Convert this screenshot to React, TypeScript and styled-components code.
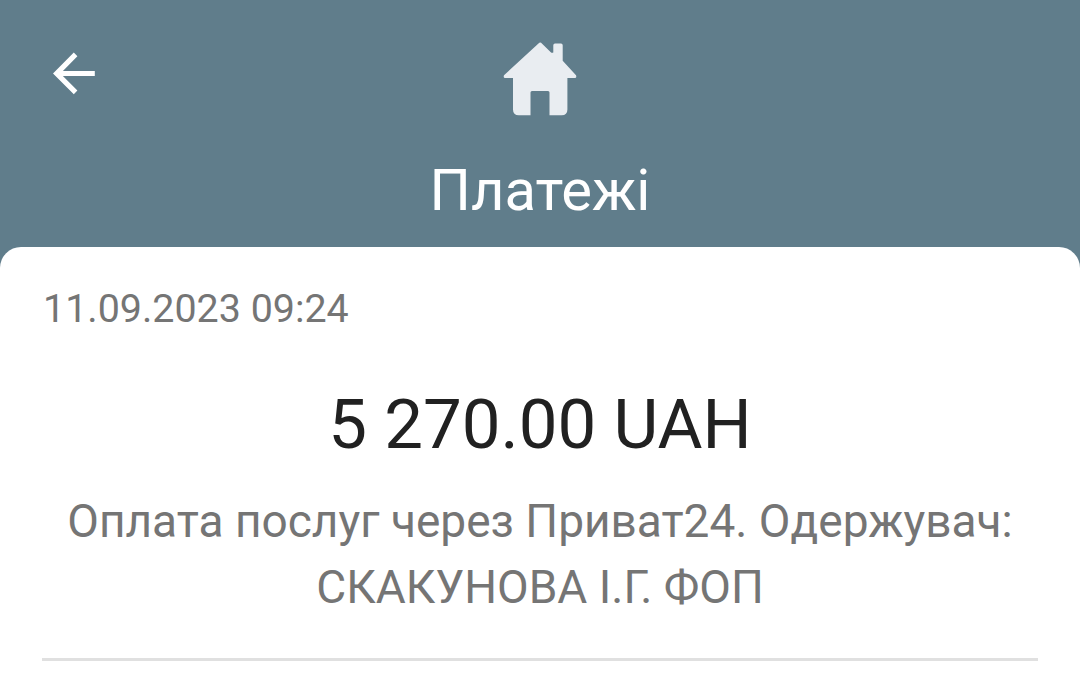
import styled, { createGlobalStyle } from 'styled-components';

export default function App() {
  return (
    <>
      <GlobalStyle />
      <Page>
        <Header>
          <BackButton aria-label="Назад">
            <svg width="43" height="43" viewBox="0 0 43 43">
              <path
                d="M41.8 18.9H9.9L24.4 4.2L20.8 0.6L-0.1 21.5L20.8 42.2L24.4 38.6L9.9 24.1H41.8Z"
                fill="#ffffff"
              />
            </svg>
          </BackButton>
          <HouseIcon width="74" height="74" viewBox="0 0 74 74">
            <path
              d="M36.3 0.8Q37.2 0 38.1 0.8L47.8 10.2Q49 11.3 50.3 10.4V3.2Q50.3 1.5 52 1.5H58Q59.7 1.5 59.7 3.2V18.8L73 33.3Q74 36 71.8 36H64.4V67.5Q64.4 73.3 58.6 73.3H46.5V50.5Q46.5 49 45 49H29Q27.5 49 27.5 50.5V73.3H15.8Q10 73.3 10 67.5V36H2.2Q0 36 1 33.3Z"
              fill="#e9edf1"
            />
          </HouseIcon>
          <Title>Платежі</Title>
        </Header>
        <Card>
          <DateTime>11.09.2023 09:24</DateTime>
          <Amount>5 270.00 UAH</Amount>
          <Description>
            Оплата послуг через Приват24. Одержувач:
            <br />
            СКАКУНОВА І.Г. ФОП
          </Description>
          <Divider />
        </Card>
      </Page>
    </>
  );
}

const GlobalStyle = createGlobalStyle`
  * {
    box-sizing: border-box;
  }

  body {
    margin: 0;
    font-family: Roboto, 'Liberation Sans', sans-serif;
    background: #607d8b;
  }
`;

const Page = styled.div`
  display: flex;
  flex-direction: column;
  height: 691px;
  overflow: hidden;
  background: #607d8b;
`;

const Header = styled.header`
  display: grid;
  grid-template-columns: 1fr 74px 1fr;
  grid-template-rows: 74px auto;
  height: 247px;
  padding: 42px 53px 0;
`;

const BackButton = styled.button`
  display: flex;
  width: 43px;
  height: 43px;
  margin-top: 10px;
  padding: 0;
  border: none;
  background: none;
`;

const HouseIcon = styled.svg`
  grid-column: 2;
`;

const Title = styled.h1`
  grid-column: 1 / -1;
  margin: 40px 0 0;
  font-size: 58px;
  font-weight: 400;
  line-height: 68px;
  text-align: center;
  color: #ffffff;
`;

const Card = styled.main`
  flex: 1;
  padding: 38px 42px 0;
  border-radius: 21px 21px 0 0;
  background: #ffffff;
`;

const DateTime = styled.div`
  padding-left: 1px;
  font-size: 39.4px;
  line-height: 48px;
  color: #757575;
`;

const Amount = styled.div`
  margin-top: 52px;
  font-size: 69px;
  line-height: 80px;
  text-align: center;
  color: #212121;
`;

const Description = styled.p`
  margin: 23px 0 0;
  font-size: 46px;
  line-height: 66px;
  text-align: center;
  white-space: nowrap;
  color: #757575;
`;

const Divider = styled.div`
  height: 3px;
  margin-top: 38px;
  background: #e0e0e0;
`;
